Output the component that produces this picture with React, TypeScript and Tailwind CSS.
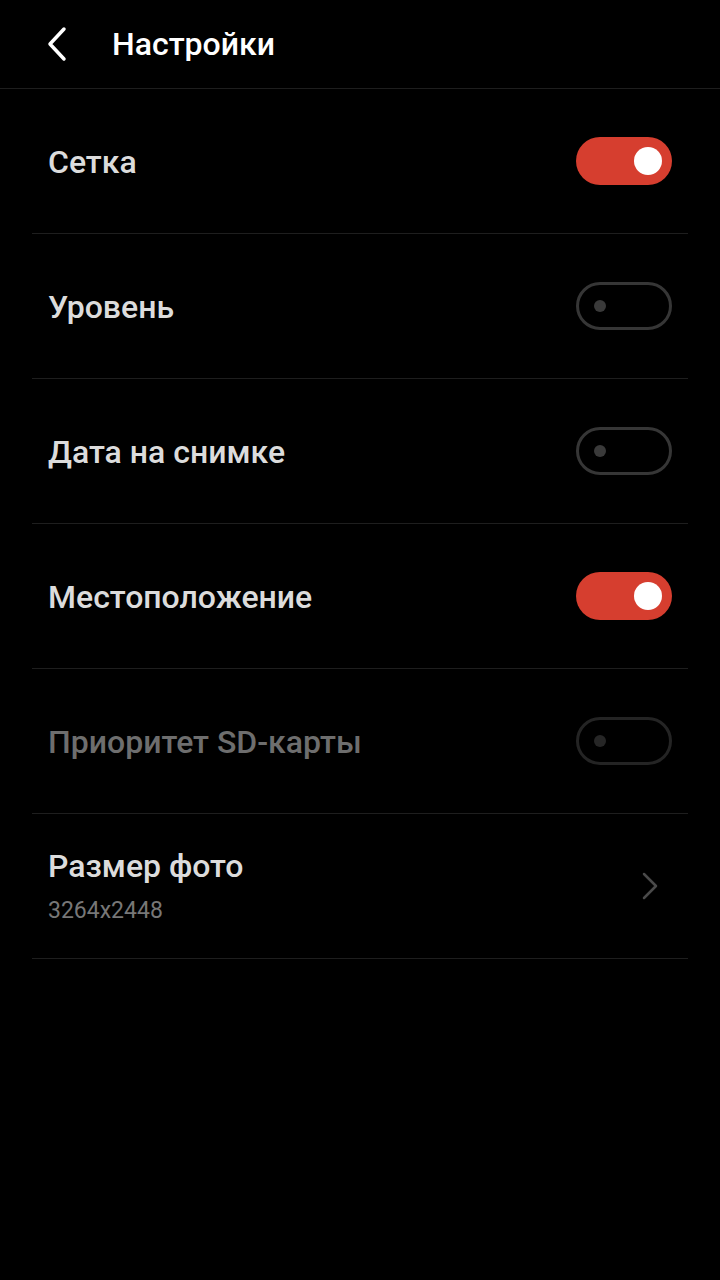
const rows = [
  { id: 1, label: "Сетка", on: true },
  { id: 2, label: "Уровень", on: false },
  { id: 3, label: "Дата на снимке", on: false },
  { id: 4, label: "Местоположение", on: true },
  { id: 5, label: "Приоритет SD-карты", on: false, disabled: true },
];

function Toggle({ on, disabled }: { on: boolean; disabled?: boolean }) {
  if (on) {
    return (
      <div className="flex h-[48px] w-[96px] items-center justify-end rounded-full bg-[#d63e2f] pr-[10px]">
        <div className="h-[28px] w-[28px] rounded-full bg-white" />
      </div>
    );
  }
  return (
    <div
      className={
        disabled
          ? "flex h-[48px] w-[96px] items-center rounded-full border-[3px] border-[#242424] pl-[15px]"
          : "flex h-[48px] w-[96px] items-center rounded-full border-[3px] border-[#363636] pl-[15px]"
      }
    >
      <div
        className={
          disabled
            ? "h-[12px] w-[12px] rounded-full bg-[#262626]"
            : "h-[12px] w-[12px] rounded-full bg-[#3a3a3a]"
        }
      />
    </div>
  );
}

export default function App() {
  return (
    <div
      className="min-h-[1280px] w-[720px] bg-black"
      style={{ fontFamily: "Roboto, 'Noto Sans', sans-serif" }}
    >
      <header className="flex h-[89px] items-center border-b border-[#1e1e1e]">
        <svg
          className="ml-[42px] h-[40px] w-[30px] text-white"
          viewBox="0 0 30 40"
          fill="none"
          stroke="currentColor"
          strokeWidth="3.5"
          strokeLinecap="round"
          strokeLinejoin="round"
        >
          <path d="M22 5L8 20l14 15" />
        </svg>
        <h1 className="ml-[40px] text-[32px] font-medium text-white">Настройки</h1>
      </header>

      <div className="mx-[32px]">
        {rows.map((row) => (
          <div
            key={row.id}
            className="flex h-[145px] items-center justify-between border-b border-[#1e1e1e] pl-[16px] pr-[16px]"
          >
            <span
              className={
                row.disabled
                  ? "pt-[2px] text-[32px] font-medium text-[#6e6e6e]"
                  : "pt-[2px] text-[32px] font-medium text-[#dcdcdc]"
              }
            >
              {row.label}
            </span>
            <Toggle on={row.on} disabled={row.disabled} />
          </div>
        ))}

        <div className="flex h-[145px] items-center justify-between border-b border-[#1e1e1e] pl-[16px] pr-[28px]">
          <div className="flex flex-col">
            <span className="text-[32px] font-medium leading-[38px] text-[#dcdcdc]">
              Размер фото
            </span>
            <span className="mt-[12px] text-[23px] leading-[28px] text-[#777777]">3264x2448</span>
          </div>
          <svg
            className="h-[30px] w-[20px] text-[#4a4a4a]"
            viewBox="0 0 20 30"
            fill="none"
            stroke="currentColor"
            strokeWidth="2.5"
            strokeLinecap="round"
            strokeLinejoin="round"
          >
            <path d="M4 3l12 12L4 27" />
          </svg>
        </div>
      </div>
    </div>
  );
}
